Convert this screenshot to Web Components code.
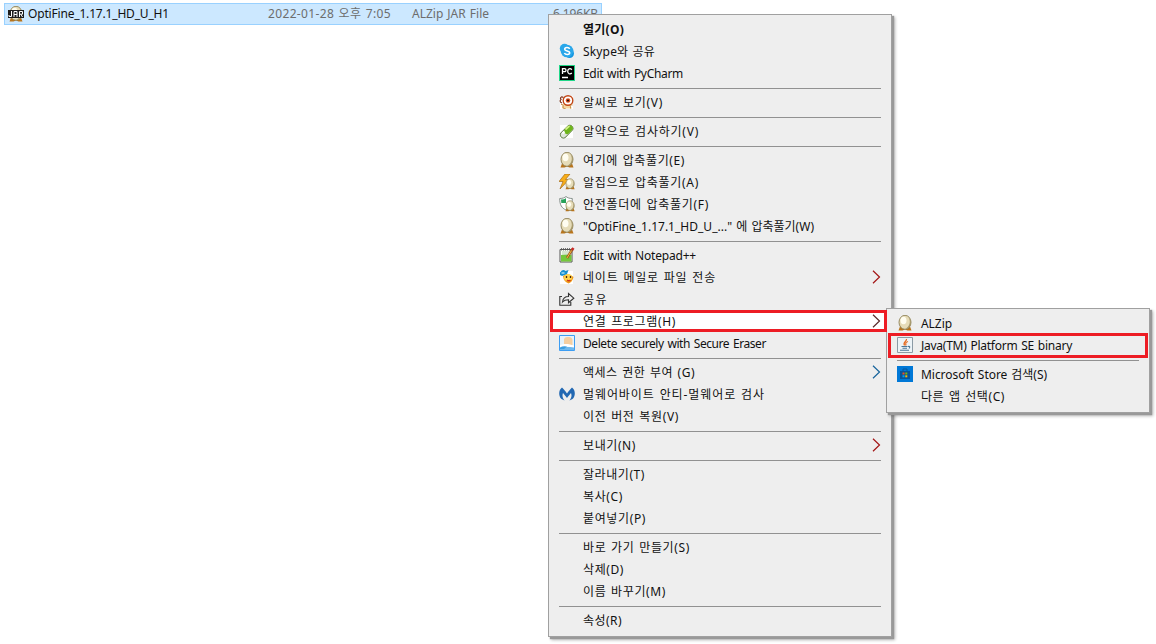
<!DOCTYPE html>
<html lang="ko">
<head>
<meta charset="utf-8">
<title>OptiFine</title>
<style>
body {
  margin: 0;
  width: 1156px;
  height: 644px;
  overflow: hidden;
  position: relative;
  background: #fff;
  font: 12px/22px "Noto Sans", "Noto Sans CJK KR", sans-serif;
  word-spacing: 1px;
  color: #111;
}

.main {
  position: absolute;
  left: 548px;
  top: 14px;
  width: 344px;
  height: 623px;
}

.sub {
  position: absolute;
  left: 886px;
  top: 308px;
  width: 264px;
  height: 105px;
}

.mark {
  position: absolute;
  box-sizing: border-box;
  border: 3px solid #ed1c24;
}
</style>
</head>
<body>

<file-row>
  <fit-text slot="name" w="141">OptiFine_1.17.1_HD_U_H1</fit-text>
  <fit-text slot="date" w="123">2022-01-28 오후 7:05</fit-text>
  <fit-text slot="type" w="77">ALZip JAR File</fit-text>
  <fit-text slot="size" w="45">6,196KB</fit-text>
</file-row>

<context-menu class="main">
  <menu-item w="41" bold>열기(O)</menu-item>
  <menu-item w="72" icon="skype">Skype와 공유</menu-item>
  <menu-item w="100" icon="pycharm">Edit with PyCharm</menu-item>
  <menu-line></menu-line>
  <menu-item w="80" icon="alsee">알씨로 보기(V)</menu-item>
  <menu-line></menu-line>
  <menu-item w="116" icon="pill">알약으로 검사하기(V)</menu-item>
  <menu-line></menu-line>
  <menu-item w="102" icon="egg">여기에 압축풀기(E)</menu-item>
  <menu-item w="116" icon="bolt">알집으로 압축풀기(A)</menu-item>
  <menu-item w="126" icon="shield">안전폴더에 압축풀기(F)</menu-item>
  <menu-item w="231" icon="egg">"OptiFine_1.17.1_HD_U_..." 에 압축풀기(W)</menu-item>
  <menu-line></menu-line>
  <menu-item w="113" icon="notepad">Edit with Notepad++</menu-item>
  <menu-item w="133" icon="nate" arrow="#a31515">네이트 메일로 파일 전송</menu-item>
  <menu-item w="25" icon="share">공유</menu-item>
  <menu-item w="93" class="open" arrow="#5a2a2a">연결 프로그램(H)</menu-item>
  <menu-item w="183" icon="eraser">Delete securely with Secure Eraser</menu-item>
  <menu-line></menu-line>
  <menu-item w="112" arrow="#17649c">액세스 권한 부여 (G)</menu-item>
  <menu-item w="182" icon="malware">멀웨어바이트 안티-멀웨어로 검사</menu-item>
  <menu-item w="96">이전 버전 복원(V)</menu-item>
  <menu-line></menu-line>
  <menu-item w="53" arrow="#a31515">보내기(N)</menu-item>
  <menu-line></menu-line>
  <menu-item w="62">잘라내기(T)</menu-item>
  <menu-item w="40">복사(C)</menu-item>
  <menu-item w="63">붙여넣기(P)</menu-item>
  <menu-line></menu-line>
  <menu-item w="107">바로 가기 만들기(S)</menu-item>
  <menu-item w="41">삭제(D)</menu-item>
  <menu-item w="83">이름 바꾸기(M)</menu-item>
  <menu-line></menu-line>
  <menu-item w="39">속성(R)</menu-item>
</context-menu>

<context-menu class="sub">
  <menu-item w="31" icon="egg">ALZip</menu-item>
  <menu-item w="151" icon="java">Java(TM) Platform SE binary</menu-item>
  <menu-line></menu-line>
  <menu-item w="126" icon="store">Microsoft Store 검색(S)</menu-item>
  <menu-item w="84">다른 앱 선택(C)</menu-item>
</context-menu>

<div class="mark" style="left:550px;top:310px;width:337px;height:22px"></div>
<div class="mark" style="left:888px;top:333px;width:260px;height:25px"></div>

<script>
const egg = `
  <path d="M1.500 15.500 3 11.500h10l1.500 4h-4l-2.500-1-2.500 1z" fill="#b8741c"/>
  <ellipse cx="8" cy="7.300" rx="6" ry="7" fill="#e6dcb8" stroke="#8f8258" stroke-width=".9"/>
  <path d="M11.500 2.500c2.500 4 1.500 8.500-3 11.300 6 0 7-8 3-11.300z" fill="#a4966a"/>
  <ellipse cx="6.500" cy="5.500" rx="3" ry="3.800" fill="#fffdf0"/>`

const icons = {
  skype: `<circle cx="5.500" cy="5.500" r="4.700" fill="#28a8ea"/><circle cx="10.500" cy="10.500" r="4.500" fill="#1496e0"/><circle cx="8" cy="8" r="6.300" fill="#2aa7ea"/>
    <path d="M10.700 5.800C9.800 4 5.700 4 5.700 6.200c0 2.300 5 1.200 5 3.600 0 2.300-4.400 2.200-5.300.2" fill="none" stroke="#fff" stroke-width="1.600"/>`,
  pycharm: `<path d="M0 0h16v16H0z" fill="#21d789"/><path d="M1 1h14v14H1z" fill="#000"/>
    <path d="M3.500 9V3.700h2a1.500 1.500 0 0 1 0 3h-2M12.800 4.700C11 2.700 8.700 4 8.700 6.300s2.300 3.600 4.100 1.700M3 12.500h6" fill="none" stroke="#fff" stroke-width="1.300"/>`,
  alsee: `<path d="M1 2h13v13H1z" fill="#fff"/><path d="M4 10h7l2 4.500H3z" fill="#f6d9a4"/>
    <path d="M4.500 3.500C2 2 .8 4 2 5.500c-1.500 1-1 3 1 3.500" fill="none" stroke="#7c3018" stroke-width="1.200"/>
    <circle cx="9" cy="6.500" r="4.800" fill="#fff" stroke="#c24716" stroke-width="1.400"/><circle cx="9" cy="6.500" r="2.300" fill="#e0501c"/><circle cx="9" cy="6.500" r="1.100" fill="#26110b"/>
    <path d="M2 10.500c1.500-.8 2.500.7 2 2.500s2 1.500 2.500 1.500M13.500 11c-1.500-.8-2.500.7-2 3.500" fill="none" stroke="#c48c46"/>`,
  pill: `<path d="M1 2h13v13H1z" fill="#fff"/><path d="m4.500 11.700 6.300-6.300" stroke="#4b6b2b" stroke-width="7" stroke-linecap="round"/><path d="m4.500 11.700 6.300-6.300" stroke="#dfe5dc" stroke-width="5.600" stroke-linecap="round"/><path d="m8 8.200 3-3" stroke="#6eb51c" stroke-width="5.600" stroke-linecap="round"/><path d="m7 6 3-2.700" stroke="#d4f283" stroke-width="1.700" stroke-linecap="round"/><path d="m3.500 10.500 2-2" stroke="#fff" stroke-width="2"/>`,
  egg,
  bolt: `<path d="M6 0 0 7.500h4L1 15l9-9.500H6.500L11 0z" fill="#f8ae19" stroke="#a56c18" stroke-width=".7"/><g transform="translate(5.500 4.500) scale(.7)">${egg}</g>`,
  shield: `<path d="M.7 2.500c3 0 5-.8 6.300-2 1.300 1.200 3.300 2 6.300 2 0 6.500-2 9.500-6.300 11.500C2.700 12 .7 9 .7 2.500z" fill="#fff" stroke="#87918c"/><path d="M2 3.500C4 3.500 6 3 7 2v5H2.300zM7 7h5.300c-.5 3-2 4.500-5.300 6z" fill="#27a25a"/><g transform="translate(5.500 4.500) scale(.7)">${egg}</g>`,
  notepad: `<path d="M1 2.500h12v12.500H1z" fill="#f7fff0" stroke="#555"/><path d="M2 8q5-1 10.500 0v6.500H2z" fill="#74c83b"/><path d="M3 5h7M3 7h6" stroke="#b7cdb0"/><path d="M2.500 1v2.500m2-2.500v2.500m2-2.500v2.500m2-2.500v2.500m2-2.500v2.500" stroke="#555" stroke-width=".8"/><path d="m8 11 5.500-9" stroke="#9a541d" stroke-width="2.500"/><path d="m8 11 4.500-7.500" stroke="#f5be43"/><path d="m13 3 1.500-2" stroke="#c92929" stroke-width="2.500"/>`,
  nate: `<path d="M1 2h13v13H1z" fill="#fff"/><path d="M4 7q5-4 10.500 1-1 5-5 6.500-5-2-5.500-7.500z" fill="#f09a1a"/><ellipse cx="9" cy="8.500" rx="4" ry="3.500" fill="#ffd54c"/><path d="M1 3.500q3-4 5.500-1.500l3-1-1.500 4-5 2-2-1z" fill="#1991d0"/><path d="M2.500 4h3" stroke="#b6e8ff" stroke-width="1.300"/><path d="M7.500 7v2m4-2v2" stroke="#4b2510" stroke-width="1.300"/><path d="M8 11q2 1.500 3.500 0" fill="none" stroke="#cf391b" stroke-width="1.500"/>`,
  share: `<path d="M3 5.500H.8v8.700h11V11M3.500 11C4 7 6 5.500 9.500 5.500v-3l5.300 4.700-5.300 4.500v-3c-3 0-4.500.6-6 2.300z" fill="none" stroke="#333" stroke-width="1.100"/>`,
  eraser: `<path d="M.5.500h15v15H.5z" fill="#e5f3fc" stroke="#3d9df2"/><path d="M1 12h14v3H1z" fill="#70b9ed"/><path d="M5 4q1-2 3-2h2q3 0 3.500 3v5H5z" fill="#f6cfa0"/><path d="m1 10 4-1h4l6 1.500v2L8 11.500l-7 1.500z" fill="#fff"/><path d="M1 12.500q3-2 7-1l-3 2.500H1z" fill="#3c9ee0"/>`,
  malware: `<path d="M3 1.500C-.5 4-.8 10 2.500 13l3 1.500C3.500 12 3 9.500 4 7c1 1 2.500 3 4 5 1.500-2 3-4 4-5 1 2.500.5 5-1.500 7.500l3-1.500c3.300-3 3-9-.5-11.500C11.500 3 9.500 5 8 7.500 6.500 5 4.500 3 3 1.500z" fill="#2268b2"/>`,
  java: `<path d="M.5.500h15v15H.5z" fill="#edf3f7" stroke="#8b9aa5"/><path d="M9.500 2C10 4.500 5.500 5 7.500 8.500M11 4.500C8 5.500 8.500 6.500 9 8.500" fill="none" stroke="#e66b21" stroke-width="1.300"/><path d="M4.500 9.500h6M5.500 11.300h4.500M3 13.300h9M11 9.500q3-.5 1 2" fill="none" stroke="#4c7797" stroke-width="1.100"/>`,
  store: `<path d="M0 0h16v16H0z" fill="#0078d7"/><path d="M3 5h10v8H3z" fill="#07549a"/><path d="M6 5V3h4v2" fill="none" stroke="#07549a"/><path d="M5.500 6.500h2v2h-2z" fill="#f25022"/><path d="M8.300 6.500h2v2h-2z" fill="#7fba00"/><path d="M5.500 9.300h2v2h-2z" fill="#00a4ef"/><path d="M8.300 9.300h2v2h-2z" fill="#ffb900"/>`
}

// Spreads its text over the width given in the w attribute
customElements.define('fit-text', class extends HTMLElement {
  constructor () {
    super()
    this.attachShadow({ mode: 'open' }).innerHTML = `
<style>
:host { display: inline-block; white-space: nowrap; }
span { display: inline-block; }
</style>
<span><slot></slot></span>`
  }

  connectedCallback () {
    const span = this.shadowRoot.querySelector('span')
    const text = this.textContent.trim()
    const width = span.getBoundingClientRect().width
    if (text && width) {
      span.style.letterSpacing = (this.getAttribute('w') - width) / text.length + 'px'
    }
  }
})

customElements.define('menu-line', class extends HTMLElement {
  constructor () {
    super()
    this.attachShadow({ mode: 'open' }).innerHTML = `
<style>
:host { display: block; height: 7px; padding: 4px 10px 0; box-sizing: border-box; }
div { height: 1px; background: #919191; }
</style>
<div></div>`
  }
})

customElements.define('menu-item', class extends HTMLElement {
  connectedCallback () {
    const icon = icons[this.getAttribute('icon')] || ''
    const arrow = this.getAttribute('arrow')
    this.attachShadow({ mode: 'open' }).innerHTML = `
<style>
:host { display: flex; align-items: center; height: 22px; padding: 0 10px; }
:host([bold]) { font-weight: bold; }
:host(.open) { background: #fff; margin: 0 3px 0 2px; padding: 0 7px 0 8px; }
.icon { width: 16px; height: 16px; margin-right: 8px; flex: none; }
.arrow { width: 9px; height: 14px; margin-left: auto; }
fit-text { padding-top: 2px; }
</style>
<svg class="icon" viewBox="0 0 16 16">${icon}</svg>
<fit-text w="${this.getAttribute('w')}">${this.textContent}</fit-text>
${arrow ? `<svg class="arrow" viewBox="0 0 9 14"><path d="m1 .7 6.500 6.300L1 13.300" fill="none" stroke="${arrow}" stroke-width="1.200"/></svg>` : ''}`
  }
})

customElements.define('context-menu', class extends HTMLElement {
  constructor () {
    super()
    this.attachShadow({ mode: 'open' }).innerHTML = `
<style>
:host {
  display: block;
  box-sizing: border-box;
  padding: 3px 0;
  background: #eee;
  border: 1px solid #a0a0a0;
  box-shadow: 2px 2px 1px #999, 3px 3px 3px rgba(0, 0, 0, .3);
}
</style>
<slot></slot>`
  }
})

customElements.define('file-row', class extends HTMLElement {
  constructor () {
    super()
    this.attachShadow({ mode: 'open' }).innerHTML = `
<style>
:host {
  display: grid;
  grid-template-columns: 260px 144px 100px 1fr;
  box-sizing: border-box;
  width: 598px;
  height: 22px;
  margin: 3px 0 0 4px;
  padding: 0 3px;
  line-height: 20px;
  color: #6d6d6d;
  background: #cce8ff;
  border: 1px solid #99d1ff;
}
div { display: flex; align-items: center; gap: 4px; color: #111; }
svg { width: 16px; height: 16px; }
::slotted([slot="size"]) { justify-self: end; }
</style>
<div>
  <svg viewBox="0 0 16 16">${egg}<path d="M0 4h16v8H0z" fill="#1c1c1c"/><path d="M1 9v1.500h2.500V5M6 11V5.500h3V11M6 8.500h3M11.500 11V5.500h3v2.700h-3m1.300 0 1.700 2.800" fill="none" stroke="#fff"/></svg>
  <slot name="name"></slot>
</div>
<slot name="date"></slot>
<slot name="type"></slot>
<slot name="size"></slot>`
  }
})
</script>
</body>
</html>
